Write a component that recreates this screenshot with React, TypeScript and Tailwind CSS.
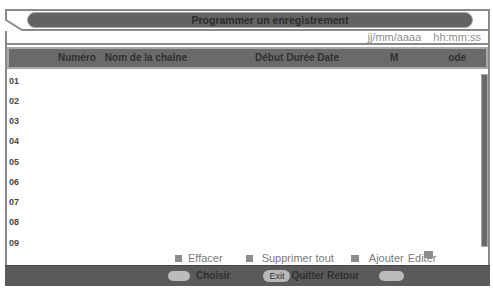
import React from "react";

const rows = ["01", "02", "03", "04", "05", "06", "07", "08", "09"];

export default function App() {
  return (
    <div className="w-[493px] h-[290px] bg-white overflow-hidden font-['Liberation_Sans',Arial,sans-serif] flex flex-col">
      <div className="ml-[5px] mt-[9px] w-[485px] flex flex-col">
        {/* Title */}
        <div className="relative h-[22px] border-t-2 border-r-2 border-[#8a8a8a]">
          <svg className="absolute left-0 top-[-2px] overflow-visible" width="483" height="24">
            <polyline points="1,0 1,11 17,21 484,21" fill="none" stroke="#8a8a8a" strokeWidth="2" />
          </svg>
          <div className="relative ml-[22px] mr-[15px] mt-[1px] h-[16px] rounded-full bg-[#626262] border border-[#a8a8a8] flex items-center justify-center pl-[40px] text-[10.5px] font-bold text-[#2c2c2c] leading-none">
            Programmer un enregistrement
          </div>
        </div>
        {/* Date row */}
        <div className="h-[14px] border-x-2 border-b-2 border-[#8a8a8a] flex items-center justify-end gap-[12px] pr-[7px] text-[11px] text-[#8e8e8e] leading-none">
          <span>jj/mm/aaaa</span>
          <span>hh:mm:ss</span>
        </div>
        {/* Main */}
        <div className="h-[220px] border-x-2 border-[#8a8a8a] flex flex-col">
          <div className="mt-[2px] h-[22px] border-2 border-[#a8a8a8] bg-[#6a6a6a] flex items-center text-[10px] font-bold text-[#303030] leading-none whitespace-nowrap">
            <span className="ml-[49px]">Numéro</span>
            <span className="ml-[9px]">Nom de la chaîne</span>
            <span className="ml-[68px]">Début Durée Date</span>
            <span className="ml-[51px]">M</span>
            <span className="ml-[50px]">ode</span>
          </div>
          <div className="flex-1 flex">
            <div className="flex-1 flex flex-col pt-[2px]">
              {rows.map((r) => (
                <div key={r} className="h-[20.25px] flex items-center pl-[2px] text-[9px] font-bold text-[#4a4a4a] leading-none">
                  {r}
                </div>
              ))}
              <div className="h-[10px] flex items-center text-[11px] text-[#7a7a7a] leading-none whitespace-nowrap">
                <span className="ml-[168px] w-[7px] h-[7px] bg-[#8c8c8c]" />
                <span className="ml-[6px]">Effacer</span>
                <span className="ml-[23px] w-[7px] h-[7px] bg-[#8c8c8c]" />
                <span className="ml-[9px]">Supprimer tout</span>
                <span className="ml-[17px] w-[8px] h-[7px] bg-[#8c8c8c]" />
                <span className="ml-[10px]">Ajouter</span>
                <span className="ml-[4px] relative">
                  Editer
                  <span className="absolute left-[16px] top-[-2px] w-[9px] h-[7px] bg-[#8c8c8c]" />
                </span>
              </div>
            </div>
            <div className="w-[7px] mt-[5px] h-[173px] bg-[#6a6a6a] border border-[#a8a8a8]" />
          </div>
        </div>
        {/* Bottom bar */}
        <div className="h-[21px] bg-[#5a5a5a] border-t border-[#444] flex items-center text-[10px] font-bold text-[#2f2f2f] leading-none whitespace-nowrap">
          <span className="ml-[163px] w-[22px] h-[10px] rounded-full bg-[#bcbcbc]" />
          <span className="ml-[6px]">Choisir</span>
          <span className="ml-[33px] w-[27px] h-[12px] rounded-[6px] bg-[#b8b8b8] flex items-center justify-center text-[9px] font-normal text-[#333]">
            Exit
          </span>
          <span className="ml-[1px]">Quitter Retour</span>
          <span className="ml-[20px] w-[25px] h-[10px] rounded-full bg-[#bcbcbc]" />
        </div>
      </div>
    </div>
  );
}
